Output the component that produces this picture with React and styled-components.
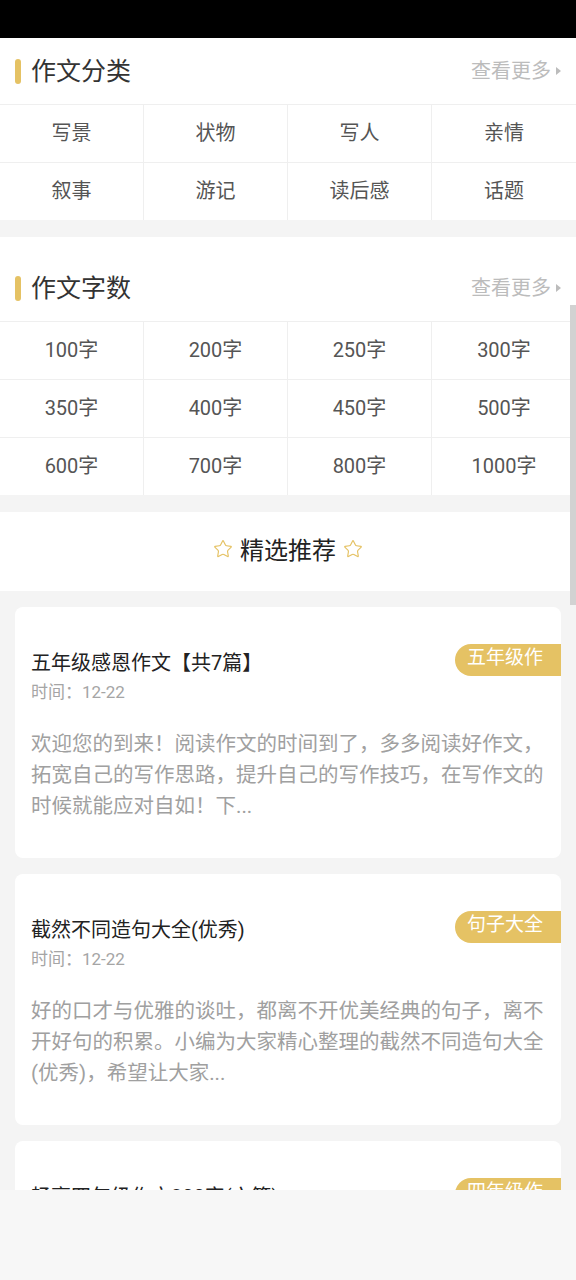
import React from "react";
import styled, { createGlobalStyle } from "styled-components";
import { Star } from "lucide-react";

const GlobalStyle = createGlobalStyle`
  body {
    margin: 0;
    background: #f4f4f4;
    font-family: Roboto, "Noto Sans CJK SC", sans-serif;
  }
`;

const categories = ["写景", "状物", "写人", "亲情", "叙事", "游记", "读后感", "话题"];
const counts = [
  "100字", "200字", "250字", "300字",
  "350字", "400字", "450字", "500字",
  "600字", "700字", "800字", "1000字",
];

const articles = [
  {
    id: 1,
    title: "五年级感恩作文【共7篇】",
    tag: "五年级作文",
    time: "12-22",
    excerpt:
      "欢迎您的到来！阅读作文的时间到了，多多阅读好作文，拓宽自己的写作思路，提升自己的写作技巧，在写作文的时候就能应对自如！下...",
  },
  {
    id: 2,
    title: "截然不同造句大全(优秀)",
    tag: "句子大全",
    time: "12-22",
    excerpt:
      "好的口才与优雅的谈吐，都离不开优美经典的句子，离不开好句的积累。小编为大家精心整理的截然不同造句大全(优秀)，希望让大家...",
  },
  {
    id: 3,
    title: "畅享四年级作文300字(六篇)",
    tag: "四年级作文",
    time: "12-22",
    excerpt:
      "时光匆匆，转眼间又到了写作文的时候，小编为大家整理了四年级作文300字，希望对大家有所帮助，欢迎阅读参考...",
  },
];

const Screen = styled.div`
  width: 576px;
  height: 1280px;
  display: flex;
  flex-direction: column;
  overflow: hidden;
`;

const StatusBar = styled.div`
  height: 38px;
  flex-shrink: 0;
  background: #000;
`;

const Viewport = styled.div`
  position: relative;
  flex: 1;
  overflow: hidden;
  background: #f4f4f4;
`;

const Content = styled.div`
  margin-top: -18px;
  display: flex;
  flex-direction: column;
  gap: 17px;
`;

const Panel = styled.section`
  background: #fff;
`;

const PanelHead = styled.div`
  height: 84px;
  box-sizing: border-box;
  padding: 14px 15px 0 15px;
  display: flex;
  align-items: center;
  justify-content: space-between;
`;

const PanelTitle = styled.h2`
  margin: 0;
  display: flex;
  align-items: center;
  gap: 10px;
  font-size: 25px;
  font-weight: 400;
  color: #333;

  &::before {
    content: "";
    width: 6px;
    height: 25px;
    border-radius: 3px;
    background: #e5c264;
    margin-top: 5px;
  }
`;

const More = styled.a`
  display: flex;
  align-items: center;
  gap: 5px;
  font-size: 20px;
  color: #bcbcbc;

  &::after {
    content: "";
    border-left: 5px solid #bcbcbc;
    border-top: 4px solid transparent;
    border-bottom: 4px solid transparent;
    margin-top: 3px;
  }
`;

const Grid = styled.div`
  display: grid;
  grid-template-columns: repeat(4, 1fr);
`;

const Cell = styled.div`
  height: 58px;
  box-sizing: border-box;
  padding-bottom: 4px;
  display: flex;
  align-items: center;
  justify-content: center;
  border-top: 1px solid #efefef;
  border-right: 1px solid #efefef;
  font-size: 20px;
  color: #555;

  &:nth-child(4n) {
    border-right: none;
  }
`;

const PickHead = styled.div`
  height: 79px;
  box-sizing: border-box;
  padding-bottom: 6px;
  background: #fff;
  display: flex;
  align-items: center;
  justify-content: center;
  gap: 7px;
  font-size: 24px;
  color: #222;
`;

const CardList = styled.div`
  display: flex;
  flex-direction: column;
  gap: 16px;
  padding: 16px 15px 0;
`;

const Card = styled.article`
  background: #fff;
  border-radius: 8px;
  padding: 37px 0 36px 16px;
`;

const CardHead = styled.div`
  display: flex;
  align-items: center;
  justify-content: space-between;
  height: 32px;
`;

const CardTitle = styled.h3`
  margin: 3px 0 0;
  font-size: 20px;
  font-weight: 400;
  color: #222;
  white-space: nowrap;
`;

const Badge = styled.span`
  width: 106px;
  height: 32px;
  flex-shrink: 0;
  box-sizing: border-box;
  padding-left: 12px;
  border-radius: 16px 0 0 16px;
  background: #e5c264;
  color: #fff;
  font-size: 19px;
  line-height: 28px;
`;

const BadgeText = styled.span`
  display: block;
  width: 76px;
  white-space: nowrap;
  overflow: hidden;
`;

const Time = styled.div`
  margin-top: 4px;
  font-size: 17px;
  line-height: 24px;
  color: #a5a5a5;
`;

const Excerpt = styled.p`
  margin: 25px 10px 0 0;
  font-size: 20.5px;
  line-height: 31px;
  color: #a0a0a0;
`;

const ScrollThumb = styled.div`
  position: absolute;
  right: 0;
  top: 267px;
  width: 6px;
  height: 300px;
  background: #d2d2d2;
`;

const Footer = styled.div`
  height: 90px;
  flex-shrink: 0;
  background: #f7f7f7;
`;

const Section = ({ title, items }) => (
  <Panel>
    <PanelHead>
      <PanelTitle>{title}</PanelTitle>
      <More>查看更多</More>
    </PanelHead>
    <Grid>
      {items.map((it) => (
        <Cell key={it}>{it}</Cell>
      ))}
    </Grid>
  </Panel>
);

export default function App() {
  return (
    <Screen>
      <GlobalStyle />
      <StatusBar />
      <Viewport>
        <Content>
          <Section title="作文分类" items={categories} />
          <Section title="作文字数" items={counts} />
          <div>
            <PickHead>
              <Star size={20} strokeWidth={1.4} color="#e5c264" />
              精选推荐
              <Star size={20} strokeWidth={1.4} color="#e5c264" />
            </PickHead>
            <CardList>
              {articles.map((a) => (
                <Card key={a.id}>
                  <CardHead>
                    <CardTitle>{a.title}</CardTitle>
                    <Badge>
                      <BadgeText>{a.tag}</BadgeText>
                    </Badge>
                  </CardHead>
                  <Time>时间：{a.time}</Time>
                  <Excerpt>{a.excerpt}</Excerpt>
                </Card>
              ))}
            </CardList>
          </div>
        </Content>
        <ScrollThumb />
      </Viewport>
      <Footer />
    </Screen>
  );
}
